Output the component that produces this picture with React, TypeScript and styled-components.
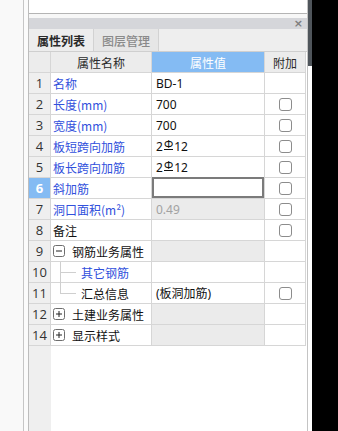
import React from 'react';
import styled, { createGlobalStyle } from 'styled-components';

const GlobalStyle = createGlobalStyle`
    html, body {
        margin: 0;
        padding: 0;
        background: #ffffff;
    }
    body {
        font-family: "Noto Sans CJK SC", "Noto Sans", sans-serif;
        font-size: 12px;
        color: #1a1a1a;
    }
`;

type Tone = 'plain' | 'link';
type ValueKind = 'normal' | 'muted' | 'editing' | 'group' | 'empty';
type Tree = 'none' | 'minus' | 'plus' | 'branch' | 'last';

interface PropRow {
    n: string;
    name: string;
    tone: Tone;
    value?: string;
    bar?: [string, string];
    kind: ValueKind;
    check?: boolean;
    tree?: Tree;
    selected?: boolean;
}

const ROWS: PropRow[] = [
    { n: '1', name: '名称', tone: 'link', value: 'BD-1', kind: 'normal' },
    { n: '2', name: '长度(mm)', tone: 'link', value: '700', kind: 'normal', check: true },
    { n: '3', name: '宽度(mm)', tone: 'link', value: '700', kind: 'normal', check: true },
    { n: '4', name: '板短跨向加筋', tone: 'link', bar: ['2', '12'], kind: 'normal', check: true },
    { n: '5', name: '板长跨向加筋', tone: 'link', bar: ['2', '12'], kind: 'normal', check: true },
    { n: '6', name: '斜加筋', tone: 'link', kind: 'editing', check: true, selected: true },
    { n: '7', name: '洞口面积(m²)', tone: 'link', value: '0.49', kind: 'muted', check: true },
    { n: '8', name: '备注', tone: 'plain', kind: 'empty', check: true },
    { n: '9', name: '钢筋业务属性', tone: 'plain', kind: 'group', tree: 'minus' },
    { n: '10', name: '其它钢筋', tone: 'link', kind: 'empty', tree: 'branch' },
    { n: '11', name: '汇总信息', tone: 'plain', value: '(板洞加筋)', kind: 'normal', check: true, tree: 'last' },
    { n: '12', name: '土建业务属性', tone: 'plain', kind: 'group', tree: 'plus' },
    { n: '14', name: '显示样式', tone: 'plain', kind: 'group', tree: 'plus' },
];

const ExpandBox = ({ open }: { open: boolean }) => (
    <svg width="12" height="12" viewBox="0 0 12 12">
        <rect x="0.5" y="0.5" width="11" height="11" rx="2" fill="#fff" stroke="#6e6e6e" />
        <line x1="3" y1="6" x2="9" y2="6" stroke="#222" />
        {!open && <line x1="6" y1="3" x2="6" y2="9" stroke="#222" />}
    </svg>
);

const renderValue = (r: PropRow) => {
    if (r.kind === 'editing') return <Editor />;
    if (r.bar) {
        return (
            <>
                {r.bar[0]}
                <Rebar>Φ</Rebar>
                {r.bar[1]}
            </>
        );
    }
    return r.value;
};

export default (() => {
    return (
        <Screen>
            <GlobalStyle />
            <Gutter />
            <GutterGap />
            <Dock>
                <TopBox />
                <DockGap />
                <TitleBar>
                    <Close>×</Close>
                </TitleBar>
                <TabStrip>
                    <Tab $active>属性列表</Tab>
                    <Tab>图层管理</Tab>
                </TabStrip>
                <Grid>
                    <NumHead />
                    <HeadCell>属性名称</HeadCell>
                    <HeadCell $accent>属性值</HeadCell>
                    <HeadCell>附加</HeadCell>
                    {ROWS.map((r) => (
                        <React.Fragment key={r.n}>
                            <NumCell $selected={r.selected}>{r.n}</NumCell>
                            <NameCell $tone={r.tone}>
                                {(r.tree === 'minus' || r.tree === 'plus') && (
                                    <Toggle>
                                        <ExpandBox open={r.tree === 'minus'} />
                                    </Toggle>
                                )}
                                {(r.tree === 'branch' || r.tree === 'last') && (
                                    <Branch>
                                        <BranchTop />
                                        <BranchBottom $last={r.tree === 'last'} />
                                    </Branch>
                                )}
                                <span>{r.name}</span>
                            </NameCell>
                            <ValueCell $kind={r.kind}>{renderValue(r)}</ValueCell>
                            <AttachCell>{r.check && <Check />}</AttachCell>
                        </React.Fragment>
                    ))}
                </Grid>
                <Filler>
                    <FillerNum />
                </Filler>
            </Dock>
            <SideStrip>
                <SideGrip />
            </SideStrip>
            <Backdrop />
        </Screen>
    );
}) as React.FC;

const Screen = styled.div`
    display: flex;
    width: 338px;
    height: 431px;
    overflow: hidden;
`;

const Gutter = styled.div`
    width: 23px;
    background: #f9f9f9;
    border-right: 1px solid #c6c6c6;
`;

const GutterGap = styled.div`
    width: 4px;
    background: #fbfbfb;
`;

const Dock = styled.div`
    width: 278px;
    display: flex;
    flex-direction: column;
    border-left: 1px solid #bdbdbd;
    border-right: 1px solid #c4c4c4;
    background: #fff;
`;

const TopBox = styled.div`
    height: 13px;
    flex: none;
    background: #fff;
    border-bottom: 1px solid #b4b4b4;
`;

const DockGap = styled.div`
    height: 4px;
    flex: none;
    background: #f7f7f7;
`;

const TitleBar = styled.div`
    height: 11px;
    flex: none;
    background: #d5d6da;
    display: flex;
    align-items: center;
    justify-content: flex-end;
    padding-right: 4px;
`;

const Close = styled.span`
    font-family: "DejaVu Sans", sans-serif;
    font-size: 11px;
    line-height: 11px;
    font-weight: bold;
    color: #7d7d7d;
`;

const TabStrip = styled.div`
    height: 22px;
    flex: none;
    display: flex;
    background: #eeeeee;
    border-bottom: 1px solid #cfcfcf;
`;

const Tab = styled.div<{ $active?: boolean }>`
    width: 64px;
    display: flex;
    align-items: center;
    justify-content: center;
    font-size: 12px;
    font-weight: ${(p) => (p.$active ? 600 : 500)};
    color: ${(p) => (p.$active ? '#2a2a2a' : '#8a8a8a')};
    background: ${(p) => (p.$active ? '#ededed' : '#e6e6e6')};
    border-right: 1px solid #d2d2d2;
`;

const Grid = styled.div`
    display: grid;
    grid-template-columns: 22px 101px 113px 41px;
    grid-auto-rows: 21px;
    width: 277px;
    flex: none;
`;

const Cell = styled.div`
    box-sizing: border-box;
    border-right: 1px solid #d6d6d6;
    border-bottom: 1px solid #d6d6d6;
    display: flex;
    align-items: center;
    min-width: 0;
    white-space: nowrap;
`;

const NumHead = styled(Cell)`
    background: #ececec;
`;

const HeadCell = styled(Cell)<{ $accent?: boolean }>`
    justify-content: center;
    background: ${(p) => (p.$accent ? '#84bbf3' : '#ececec')};
    color: ${(p) => (p.$accent ? '#ffffff' : '#2a2a2a')};
    font-size: 12px;
`;

const NumCell = styled(Cell)<{ $selected?: boolean }>`
    justify-content: center;
    background: ${(p) => (p.$selected ? '#84bbf3' : '#efefef')};
    color: ${(p) => (p.$selected ? '#ffffff' : '#333333')};
    font-family: "Open Sans", "Noto Sans", sans-serif;
    font-weight: ${(p) => (p.$selected ? 700 : 400)};
    font-size: 13px;
`;

const NameCell = styled(Cell)<{ $tone: Tone }>`
    padding-left: 2px;
    color: ${(p) => (p.$tone === 'link' ? '#3150dc' : '#111111')};
    font-size: 12px;
    align-items: stretch;
    span {
        display: flex;
        align-items: center;
    }
`;

const Toggle = styled.div`
    display: flex;
    align-items: center;
    margin-right: 7px;
    svg {
        display: block;
    }
`;

const Branch = styled.div`
    display: flex;
    flex-direction: column;
    width: 16px;
    margin-left: 7px;
    margin-right: 5px;
    margin-bottom: -1px;
`;

const BranchTop = styled.div`
    flex: 1;
    border-left: 1px solid #cfcfcf;
    border-bottom: 1px solid #cfcfcf;
`;

const BranchBottom = styled.div<{ $last?: boolean }>`
    flex: 1;
    border-left: 1px solid ${(p) => (p.$last ? 'transparent' : '#cfcfcf')};
`;

const ValueCell = styled(Cell)<{ $kind: ValueKind }>`
    padding-left: ${(p) => (p.$kind === 'editing' ? '0' : '4px')};
    align-items: ${(p) => (p.$kind === 'editing' ? 'stretch' : 'center')};
    background: ${(p) => (p.$kind === 'muted' || p.$kind === 'group' ? '#ebebeb' : '#ffffff')};
    color: ${(p) => (p.$kind === 'muted' ? '#a2a2a2' : '#111111')};
    font-family: "Noto Sans", "Noto Sans CJK SC", sans-serif;
    font-size: 12px;
`;

const Editor = styled.div`
    flex: 1;
    margin-top: -1px;
    border: 2px solid #7b7b7b;
    background: #fff;
`;

const Rebar = styled.span`
    display: inline-block;
    font-size: 11px;
    line-height: 10px;
    border-bottom: 1px solid #111;
    transform: translateY(-2px);
    margin: 0 1px;
`;

const AttachCell = styled(Cell)`
    justify-content: center;
    background: #fff;
`;

const Check = styled.div`
    box-sizing: border-box;
    width: 13px;
    height: 13px;
    border: 1px solid #8c8c8c;
    border-radius: 3px;
    background: #fff;
`;

const Filler = styled.div`
    flex: 1;
    display: flex;
`;

const FillerNum = styled.div`
    width: 22px;
    background: #efefef;
`;

const SideStrip = styled.div`
    width: 4px;
    display: flex;
    flex-direction: column;
    background: #fff;
`;

const SideGrip = styled.div`
    height: 66px;
    background: #4f555b;
`;

const Backdrop = styled.div`
    flex: 1;
    background: #000;
`;
